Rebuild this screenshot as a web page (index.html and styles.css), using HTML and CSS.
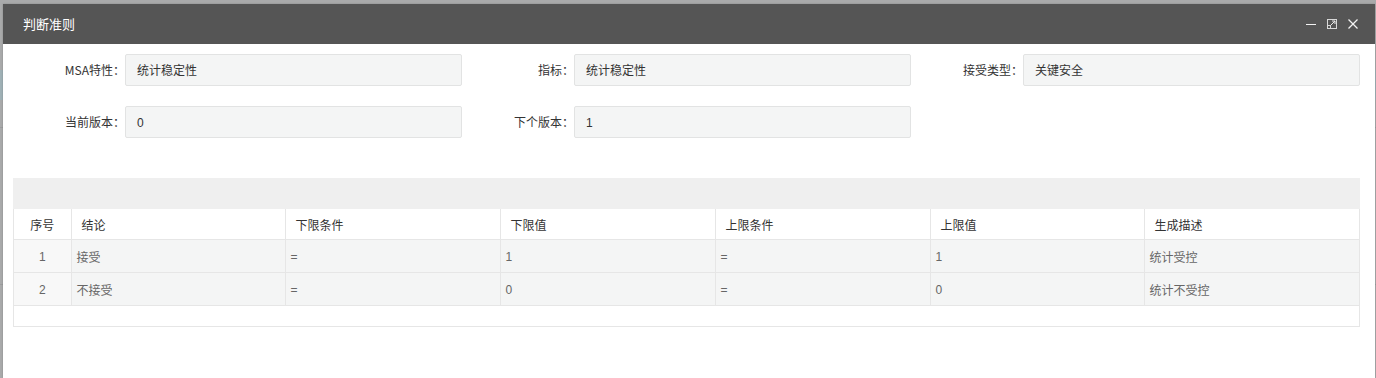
FILE: index.html
```html
<!DOCTYPE html>
<html lang="zh-CN">
<head>
<meta charset="utf-8">
<title>判断准则</title>
<link rel="stylesheet" href="styles.css">
</head>
<body>
<div class="dialog">
  <div class="dialog-head">
    <span class="dialog-title">判断准则</span>
    <div class="dialog-tools">
      <svg class="tool" width="12" height="12" viewBox="0 0 12 12"><line x1="1" y1="6.5" x2="11" y2="6.5" stroke="#f2f2f2" stroke-width="1"/></svg>
      <svg class="tool" width="12" height="12" viewBox="0 0 12 12"><rect x="1.5" y="1.5" width="9" height="9" fill="none" stroke="#d8d8d8" stroke-width="1"/><rect x="1.5" y="7.5" width="3" height="3" fill="none" stroke="#d8d8d8" stroke-width="1"/><line x1="5" y1="7" x2="9" y2="3" stroke="#e8e8e8" stroke-width="1"/><polyline points="6,3 9,3 9,6" fill="none" stroke="#e8e8e8" stroke-width="1"/></svg>
      <svg class="tool" width="12" height="12" viewBox="0 0 12 12"><line x1="1.5" y1="1.5" x2="10.5" y2="10.5" stroke="#f2f2f2" stroke-width="1.2"/><line x1="10.5" y1="1.5" x2="1.5" y2="10.5" stroke="#f2f2f2" stroke-width="1.2"/></svg>
    </div>
  </div>
  <div class="dialog-body">
    <div class="form-grid">
      <div class="field"><label class="field-label">MSA特性：</label><div class="field-input">统计稳定性</div></div>
      <div class="field"><label class="field-label">指标：</label><div class="field-input">统计稳定性</div></div>
      <div class="field"><label class="field-label">接受类型：</label><div class="field-input">关键安全</div></div>
      <div class="field"><label class="field-label">当前版本：</label><div class="field-input">0</div></div>
      <div class="field"><label class="field-label">下个版本：</label><div class="field-input">1</div></div>
    </div>
    <div class="grid-panel">
      <div class="grid-toolbar"></div>
      <table class="grid">
        <colgroup>
          <col class="c-no"><col class="c-214"><col class="c-215"><col class="c-215"><col class="c-215"><col class="c-214"><col class="c-last">
        </colgroup>
        <thead>
          <tr><th class="center">序号</th><th>结论</th><th>下限条件</th><th>下限值</th><th>上限条件</th><th>上限值</th><th>生成描述</th></tr>
        </thead>
        <tbody>
          <tr><td class="center num">1</td><td>接受</td><td>=</td><td>1</td><td>=</td><td>1</td><td>统计受控</td></tr>
          <tr><td class="center num">2</td><td>不接受</td><td>=</td><td>0</td><td>=</td><td>0</td><td>统计不受控</td></tr>
        </tbody>
      </table>
      <div class="grid-foot"></div>
    </div>
  </div>
</div>
</body>
</html>
```

FILE: styles.css
```css
html, body {
  margin: 0;
  padding: 0;
}
body {
  width: 1376px;
  height: 378px;
  overflow: hidden;
  position: relative;
  background-color: #a9aaab;
  background-image:
    linear-gradient(to bottom, transparent 70px, #9fb1b6 70px, #9fb1b6 100px, transparent 100px),
    repeating-linear-gradient(to bottom, transparent 0, transparent 127px, #9c9d9e 127px, #9c9d9e 128px, transparent 128px, transparent 157px);
  font-family: "Liberation Sans", "Noto Sans CJK SC", Arial, sans-serif;
  font-size: 12px;
  color: #333;
}
.dialog {
  position: absolute;
  left: 3px;
  top: 4px;
  width: 1372px;
  height: 374px;
  background: #fff;
  box-shadow: 0 0 2px rgba(0,0,0,0.2);
}
.dialog-head {
  height: 40px;
  background: #555;
  display: flex;
  align-items: center;
  justify-content: space-between;
  padding: 0 16px 0 20px;
}
.dialog-title {
  color: #fff;
  font-size: 13px;
  font-family: "Noto Sans CJK SC", "Liberation Sans", sans-serif;
  margin-top: -2px;
}
.dialog-tools {
  display: flex;
  gap: 9px;
  align-items: center;
}
.tool {
  display: block;
}
.dialog-body {
  padding: 10px 12px 0 10px;
}
.form-grid {
  display: grid;
  grid-template-columns: 449px 449px 449px;
  row-gap: 20px;
}
.field {
  display: flex;
  align-items: center;
}
.field-label {
  width: 112px;
  text-align: right;
  box-sizing: border-box;
  color: #333;
  font-family: "Noto Sans CJK SC", "Liberation Sans", sans-serif;
  margin-top: -2px;
}
.field-input {
  width: 337px;
  height: 32px;
  box-sizing: border-box;
  border: 1px solid #e2e3e3;
  border-radius: 2px;
  background: #f4f5f5;
  padding: 2px 0 0 11px;
  line-height: 28px;
  color: #333;
}
.grid-panel {
  margin-top: 40px;
  width: 1347px;
  border: 1px solid #e6e6e6;
  border-top: none;
  box-sizing: border-box;
}
.grid-toolbar {
  height: 31px;
  background: #efefef;
  margin: 0 -1px;
}
.grid {
  border-collapse: collapse;
  table-layout: fixed;
  width: 1345px;
}
.c-no { width: 57px; }
.c-214 { width: 214px; }
.c-215 { width: 215px; }
.c-last { width: 215px; }
.grid th, .grid td {
  border: 1px solid #e6e6e6;
  text-align: left;
  white-space: nowrap;
  overflow: hidden;
}
.grid tr > :first-child { border-left: none; }
.grid tr > :last-child { border-right: none; }
.grid thead tr > * { border-top: none; }
.grid th {
  height: 30px;
  padding: 0 10px;
  font-weight: normal;
  color: #333;
  background: #fff;
}
.grid td {
  height: 31px;
  padding: 1px 5px 0;
  color: #666;
  background: #f4f5f5;
}
.grid td.num {
  background: #f8f8f8;
}
.grid .center {
  text-align: center;
}
.grid-foot {
  height: 20px;
  background: #fff;
}
```
